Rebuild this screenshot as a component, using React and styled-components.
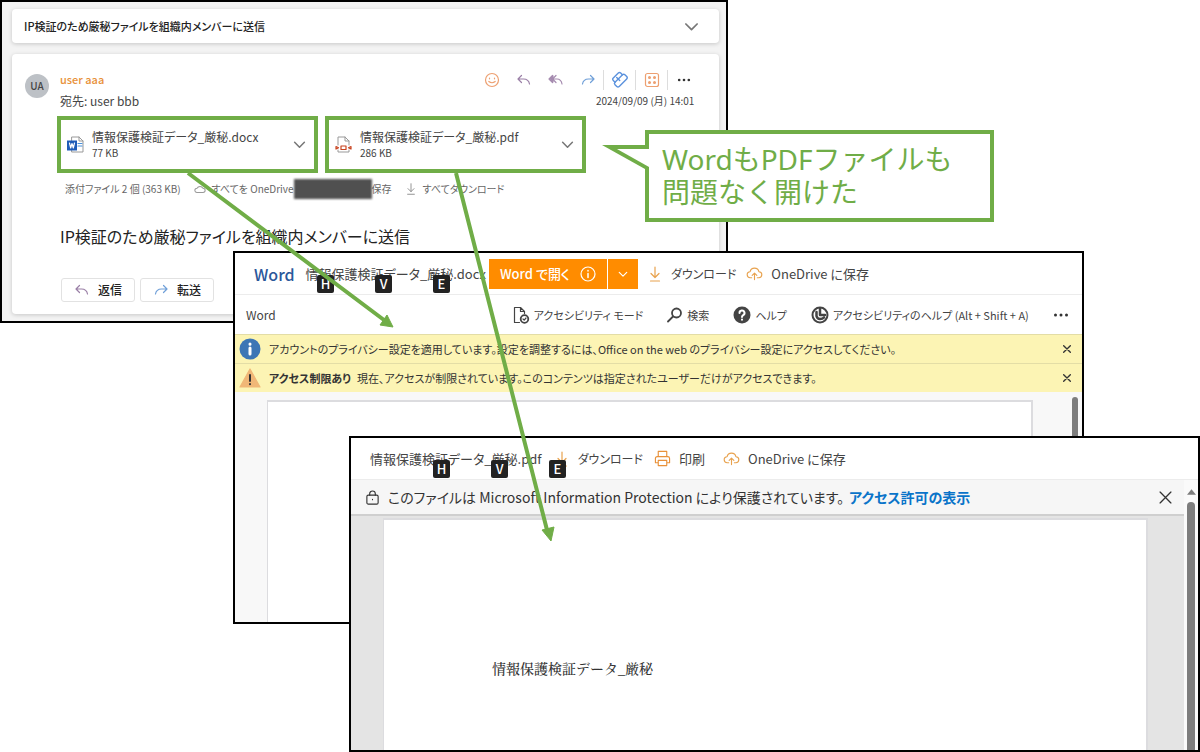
import React from "react";
import styled, { createGlobalStyle } from "styled-components";

const GREEN = "#70ad47";

const GlobalStyle = createGlobalStyle`
  * {
    box-sizing: border-box;
  }
  body {
    margin: 0;
    background: #fff;
    color: #444;
    font-family: "Noto Sans CJK JP", sans-serif;
    font-feature-settings: "palt";
    font-size: 12px;
    line-height: 16px;
  }
  button {
    font: inherit;
    font-feature-settings: inherit;
    color: inherit;
    background: none;
    border: none;
    padding: 0;
    display: inline-flex;
    align-items: center;
    white-space: nowrap;
    cursor: pointer;
  }
  h1, h2, p {
    margin: 0;
    font-weight: 400;
  }
`;

//the three windows are stacked freely on this canvas
const Stage = styled.main`
  position: relative;
  min-height: 752px;
  overflow: hidden;
`;
const Window = styled.section`
  position: absolute;
  left: ${(props) => props.$left}px;
  top: ${(props) => props.$top}px;
  width: ${(props) => props.$width};
  min-height: ${(props) => props.$height}px;
  display: flex;
  flex-direction: column;
  border: 2px solid #000;
  background: ${(props) => props.$bg || "#fff"};
  overflow: hidden;
  white-space: nowrap;
`;
const Svg = styled.svg`
  flex: none;
  width: ${(props) => props.$w || 16}px;
  height: ${(props) => props.$h || props.$w || 16}px;
  color: ${(props) => props.$color || "inherit"};
  fill: none;
  stroke: currentColor;
  stroke-width: ${(props) => props.$stroke || 1.2};
  stroke-linecap: round;
  stroke-linejoin: round;
`;

//mail
const MailBody = styled.div`
  flex: 1;
  display: flex;
  flex-direction: column;
  gap: 11px;
  padding: 7px 7px 7px 10px;
`;
const Card = styled.div`
  background: #fff;
  border-radius: 4px;
  box-shadow: 0 1px 4px rgba(0, 0, 0, 0.18);
`;
const ThreadTitle = styled(Card)`
  height: 34px;
  display: flex;
  align-items: center;
  justify-content: space-between;
  padding: 0 20px 0 12px;
  h1 {
    font-size: 11px;
    font-weight: 500;
    color: #222;
  }
`;
const Message = styled(Card)`
  flex: 1;
  padding: 14px 20px 12px 13px;
`;
const MessageHead = styled.header`
  display: grid;
  grid-template-columns: 24px 1fr auto;
  column-gap: 11px;
`;
const Avatar = styled.div`
  width: 24px;
  height: 24px;
  margin-top: 6px;
  border-radius: 50%;
  background: #bdc1c6;
  color: #444;
  font-size: 10px;
  font-weight: 500;
  display: flex;
  align-items: center;
  justify-content: center;
`;
const People = styled.div`
  display: grid;
  grid-template-rows: 21px 24px;
  align-items: center;
  strong {
    color: #e8913a;
    font-size: 11px;
    font-weight: 500;
  }
`;
const HeadRight = styled.div`
  display: grid;
  grid-template-rows: 24px 18px;
  align-items: center;
  justify-items: end;
  time {
    margin-right: 5px;
    font-size: 10px;
  }
`;
const Actions = styled.div`
  display: flex;
  align-items: center;
  button {
    justify-content: center;
    width: 32px;
    height: 20px;
    border-left: 1px solid transparent;
  }
  button.divided {
    border-left-color: #ddd;
  }
`;
const Attachments = styled.div`
  display: flex;
  gap: 7px;
  margin: 3px 0 0 32px;
`;
const Attachment = styled.button`
  && {
    width: 261px;
    height: 57px;
    border: 4px solid ${GREEN};
    background: #fff;
    padding: 4px 8px 4px 6px;
    gap: 8px;
    text-align: left;
  }
  div {
    flex: 1;
    display: grid;
  }
  small {
    font-size: 10px;
  }
`;
const SaveRow = styled.div`
  display: flex;
  align-items: center;
  margin: 6px 0 0 40px;
  height: 20px;
  font-size: 10px;
  color: #666;
  button {
    gap: 6px;
    margin-left: 13px;
  }
`;
const Redacted = styled.span`
  width: 78px;
  height: 20px;
  background: #505050;
  filter: blur(1px);
`;
const Subject = styled.h2`
  margin: 23px 0 0 35px;
  font-size: 16px;
  line-height: 28px;
  color: #222;
`;
const Replies = styled.div`
  display: flex;
  gap: 5px;
  margin: 28px 0 0 36px;
  button {
    width: 74px;
    height: 24px;
    justify-content: center;
    gap: 8px;
    border: 1px solid #e2e2e2;
    border-radius: 3px;
    font-weight: 500;
    color: #222;
  }
`;

//viewers
const ViewerHead = styled.header`
  position: relative;
  display: flex;
  align-items: center;
  height: 42px;
  padding-left: 19px;
  border-bottom: 1px solid #ececec;
  font-size: 13px;
`;
const Tool = styled.button`
  && {
    gap: 8px;
    margin-left: ${(props) => props.$gap}px;
    font-size: ${(props) => props.$size || 13}px;
  }
`;
const Brand = styled.strong`
  margin-right: 11px;
  font-size: 16px;
  font-weight: 500;
  color: #2b579a;
`;
const KeyTips = styled.div`
  position: absolute;
  left: 82px;
  bottom: 1px;
  display: flex;
  gap: 41px;
`;
const Key = styled.kbd`
  width: 17px;
  height: 18px;
  border-radius: 2px;
  background: #222;
  color: #fff;
  font-family: inherit;
  font-size: 13px;
  font-weight: 500;
  line-height: 18px;
  text-align: center;
`;
const OpenInWord = styled.div`
  display: flex;
  gap: 1px;
  height: 30px;
  margin-left: 3px;
  button {
    justify-content: center;
    gap: 10px;
    padding: 0 11px;
    background: #ff8c00;
    color: #fff;
    font-weight: 500;
  }
  button:last-child {
    width: 30px;
    padding: 0;
  }
`;
const WordTools = styled.nav`
  display: flex;
  align-items: center;
  justify-content: flex-end;
  gap: 24px;
  height: 39px;
  padding: 0 13px 0 11px;
  font-size: 11px;
  span {
    margin-right: auto;
    font-size: 12px;
  }
  button {
    gap: 4px;
  }
`;
const Notice = styled.div`
  display: flex;
  align-items: center;
  gap: 8px;
  height: 29px;
  padding: 0 11px 0 4px;
  background: #fcf4b4;
  border-top: 1px solid #e3dda6;
  color: #333;
  font-size: 11px;
  p {
    flex: 1;
  }
  b {
    font-weight: 700;
    margin-right: 6px;
  }
`;
const WordCanvas = styled.div`
  flex: 1;
  display: flex;
  background: #f8f8f8;
  padding: 0 4px 0 32px;
`;
const Sheet = styled.article`
  flex: 1;
  background: #fff;
  border: solid #dcdcdf;
  border-width: 2px 2px 0 1px;
  margin: ${(props) => props.$margin};
`;
const ScrollColumn = styled.div`
  display: flex;
  flex-direction: column;
`;
const Thumb = styled.div`
  flex: 1;
  width: ${(props) => props.$width}px;
  margin-top: ${(props) => props.$top}px;
  border-radius: 4px 4px 0 0;
  background: #7d7d7d;
`;
const PdfMain = styled.div`
  flex: 1;
  display: flex;
`;
const PdfPane = styled.div`
  flex: 1;
  display: flex;
  flex-direction: column;
  background: #e4e4e4;
`;
const ProtectBar = styled.div`
  display: flex;
  align-items: center;
  height: 36px;
  padding: 0 12px 0 14px;
  background: #f6f6f6;
  border-bottom: 2px solid #cfcfcf;
  font-size: 14px;
  color: #333;
  p {
    margin: 0 5px 0 8px;
  }
  a {
    margin-right: auto;
    color: #0a74c9;
    font-weight: 700;
    text-decoration: none;
  }
`;
const DocText = styled.p`
  padding: 138px 0 0 108px;
  font-family: "Liberation Serif", "Noto Serif CJK JP", "Noto Sans CJK JP", serif;
  font-feature-settings: normal;
  font-size: 14px;
  font-weight: 500;
  line-height: 24px;
  color: #333;
`;
const PdfScroll = styled.div`
  display: flex;
  flex-direction: column;
  align-items: center;
  width: 14px;
  padding-top: 9px;
  background: #fafafa;
`;

//annotations drawn above the windows
const Callout = styled.aside`
  position: absolute;
  left: 645px;
  top: 130px;
  width: 349px;
  padding: 9px 13px;
  border: 4px solid ${GREEN};
  background: #fff;
  color: ${GREEN};
  font-family: "Noto Sans", "Noto Sans CJK JP", sans-serif;
  font-feature-settings: normal;
  font-size: 28px;
  font-weight: 400;
  line-height: 33px;
`;
const Tail = styled.svg`
  position: absolute;
  left: -50px;
  top: 9px;
`;
const Arrows = styled.svg`
  position: absolute;
  left: 0;
  top: 0;
  pointer-events: none;
`;

const Chevron = (props) => (
  <Svg viewBox="0 0 12 12" $w={13} $color="#777" $stroke={1.4} {...props}>
    <path d="M1.5 4 6 8.5 10.5 4" />
  </Svg>
);
const Reply = (props) => (
  <Svg viewBox="0 0 16 16" $color="#9a7fa6" {...props}>
    <path d="M5.500 3.500 2 7l3.500 3.500M2 7h5.500c3.500 0 5.500 2 6 5" />
  </Svg>
);
const Forward = (props) => (
  <Svg viewBox="0 0 16 16" $color="#6f9fd8" {...props}>
    <path d="m10.500 3.500 3.500 3.500-3.500 3.500M14 7H8.500c-3.500 0-5.500 2-6 5" />
  </Svg>
);
const Dots = (props) => (
  <Svg viewBox="0 0 16 16" $color="#333" {...props}>
    <g fill="currentColor" stroke="none">
      <circle cx="2.500" cy="8" r="1.500" />
      <circle cx="8" cy="8" r="1.500" />
      <circle cx="13.500" cy="8" r="1.500" />
    </g>
  </Svg>
);
const Download = (props) => (
  <Svg viewBox="0 0 16 16" $color="#e8a24e" {...props}>
    <path d="M8 1v10.500M4 7.500l4 4 4-4M3.500 15h9" />
  </Svg>
);
const CloudUp = () => (
  <Svg viewBox="0 0 18 16" $w={17} $h={15} $color="#e8a24e">
    <path d="M6 12.500H4.500a3.200 3.200 0 0 1-.2-6.400 4.800 4.800 0 0 1 9.400 0 3.200 3.200 0 0 1-.2 6.400H12M9 14.500V7.500M6.500 10 9 7.500l2.500 2.500" />
  </Svg>
);
const Close = (props) => (
  <Svg viewBox="0 0 12 12" $w={12} {...props}>
    <path d="m1 1 10 10M11 1 1 11" />
  </Svg>
);

function Keys() {
  return (
    <KeyTips>
      {["H", "V", "E"].map((key) => (
        <Key key={key}>{key}</Key>
      ))}
    </KeyTips>
  );
}

function MailWindow() {
  return (
    <Window $left={0} $top={0} $width="60.7%" $height={323} $bg="#f3f3f3">
      <MailBody>
        <ThreadTitle>
          <h1>IP検証のため厳秘ファイルを組織内メンバーに送信</h1>
          <button aria-label="展開">
            <Chevron $w={15} />
          </button>
        </ThreadTitle>
        <Message>
          <MessageHead>
            <Avatar>UA</Avatar>
            <People>
              <strong>user aaa</strong>
              <span>宛先: user bbb</span>
            </People>
            <HeadRight>
              <Actions>
                <button aria-label="リアクション">
                  <Svg viewBox="0 0 16 16" $color="#eda071">
                    <circle cx="8" cy="8" r="6.500" />
                    <path d="M5.500 6v.8M10.500 6v.8M4.800 9.500q3.200 2.500 6.400 0" />
                  </Svg>
                </button>
                <button aria-label="返信">
                  <Reply />
                </button>
                <button aria-label="全員に返信">
                  <Svg viewBox="0 0 16 16" $color="#a68cb0">
                    <path
                      d="M4.500 3.500 1 7l3.500 3.500M8 3.500 4.500 7 8 10.500M4.500 7H9c3 0 4.500 2 5 5"
                    />
                    <path d="M5 4v6L2 7z" fill="currentColor" />
                  </Svg>
                </button>
                <button aria-label="転送">
                  <Forward />
                </button>
                <button className="divided" aria-label="Viva">
                  <Svg viewBox="0 0 18 18" $w={18} $color="#5b92dd" $stroke={1.4}>
                    <path d="m5.500 9.800 6-6q1.200-1.200 2.400 0l1.800 1.800q1.200 1.200 0 2.400l-7.500 7.500q-1.200 1.200-2.400 0L4 13.700q-1.200-1.200 0-2.400z" />
                    <path d="M4 11.300 2.300 9.500q-1.200-1.200 0-2.400l5-5q1.200-1.200 2.400 0l1.700 1.700M5.700 6.500l3 3" />
                  </Svg>
                </button>
                <button className="divided" aria-label="アプリ">
                  <Svg viewBox="0 0 16 16" $color="#eda071">
                    <rect x="1.500" y="1.500" width="13" height="13" rx="2" />
                    <path
                      d="M5.500 5.500h.01M10.500 5.500h.01M5.500 10.500h.01M10.500 10.500h.01"
                      strokeWidth="3"
                    />
                  </Svg>
                </button>
                <button className="divided" aria-label="その他">
                  <Dots $w={14} />
                </button>
              </Actions>
              <time dateTime="2024-09-09T14:01">2024/09/09 (月) 14:01</time>
            </HeadRight>
          </MessageHead>

          <Attachments>
            <Attachment>
              <Svg viewBox="0 0 17 17" $w={17} $color="#999">
                <path d="M5 1h7l4 4v11H5zM12 1v4h4" fill="#fff" strokeWidth="1" />
                <path d="M11 7.500h4M11 10h4" stroke="#4a90d9" />
                <path d="M0 4.500h10v10H0z" fill="#1e5cb8" stroke="none" />
                <path d="m2.500 7 1.200 5L5 7.500 6.300 12l1.200-5" stroke="#fff" />
              </Svg>
              <div>
                <span>情報保護検証データ_厳秘.docx</span>
                <small>77 KB</small>
              </div>
              <Chevron />
            </Attachment>
            <Attachment>
              <Svg viewBox="0 0 17 17" $w={17} $color="#999">
                <path d="M3 9V1h7l4 4v4M10 1v4h4M3 14v2h11v-2" strokeWidth="1" />
                <path
                  d="M6 10h5v3.500H6zM1 10.500l2.500 1.300L1 13zM16 10.500l-2.500 1.300L16 13z"
                  stroke="#c8431f"
                />
              </Svg>
              <div>
                <span>情報保護検証データ_厳秘.pdf</span>
                <small>286 KB</small>
              </div>
              <Chevron />
            </Attachment>
          </Attachments>

          <SaveRow>
            <span>添付ファイル 2 個 (363 KB)</span>
            <button>
              <Svg viewBox="0 0 14 10" $w={12} $h={9} $color="#999">
                <path d="M3.500 8.500a2.500 2.500 0 0 1 0-5 4 4 0 0 1 7 0 2.500 2.500 0 0 1 0 5z" />
              </Svg>
              すべてを OneDrive
            </button>
            <Redacted />
            <span>保存</span>
            <button>
              <Download $w={12} $color="#888" />
              すべてダウンロード
            </button>
          </SaveRow>

          <Subject>IP検証のため厳秘ファイルを組織内メンバーに送信</Subject>
          <Replies>
            <button>
              <Reply />
              返信
            </button>
            <button>
              <Forward />
              転送
            </button>
          </Replies>
        </Message>
      </MailBody>
    </Window>
  );
}

function WordWindow() {
  return (
    <Window $left={233} $top={251} $width="70.9%" $height={373}>
      <ViewerHead>
        <Brand>Word</Brand>
        <span>情報保護検証データ_厳秘.docx</span>
        <OpenInWord>
          <button>
            Word で開く
            <Svg viewBox="0 0 16 16">
              <circle cx="8" cy="8" r="7" />
              <path d="M8 7.500v4M8 4.500v.5" strokeWidth="1.500" />
            </Svg>
          </button>
          <button aria-label="開き方">
            <Chevron $w={10} $color="#fff" />
          </button>
        </OpenInWord>
        <Tool $gap={9} $size={12}>
          <Download />
          ダウンロード
        </Tool>
        <Tool $gap={10}>
          <CloudUp />
          OneDrive に保存
        </Tool>
        <Keys />
      </ViewerHead>
      <WordTools>
        <span>Word</span>
        <button>
          <Svg viewBox="0 0 18 18" $w={18}>
            <path d="M7.500 16.500h-5v-15h6l4 4v2M8.500 1.500v4h4" />
            <circle cx="12.500" cy="13" r="3.800" strokeWidth="1.800" />
            <path d="m11 13 1.200 1.200L14 12" />
          </Svg>
          アクセシビリティ モード
        </button>
        <button>
          <Svg viewBox="0 0 16 16" $stroke={1.8}>
            <circle cx="9.500" cy="6" r="4.500" />
            <path d="m6 9.500-5 5" />
          </Svg>
          検索
        </button>
        <button>
          <Svg viewBox="0 0 18 18" $w={18}>
            <circle cx="9" cy="9" r="8.500" fill="currentColor" stroke="none" />
            <path d="M6.500 7a2.500 2.500 0 1 1 3.700 2.200Q9 10 9 11M9 13.500v.2" stroke="#fff" strokeWidth="2" />
          </Svg>
          ヘルプ
        </button>
        <button>
          <Svg viewBox="0 0 18 18" $w={18}>
            <circle cx="9" cy="9" r="7.500" strokeWidth="2" />
            <path d="M9 3v6h5M5.500 6v4q.8 3 3.500 3t4-1.500" strokeWidth="2.500" />
          </Svg>
          アクセシビリティのヘルプ (Alt + Shift + A)
        </button>
        <button aria-label="その他">
          <Dots />
        </button>
      </WordTools>
      <Notice>
        <Svg viewBox="0 0 22 22" $w={22}>
          <circle cx="11" cy="11" r="10.500" fill="#3d76b5" stroke="none" />
          <path d="M11 10v6M11 6v.2" stroke="#fff" strokeWidth="3" />
        </Svg>
        <p>
          アカウントのプライバシー設定を適用しています。設定を調整するには、Office
          on the web のプライバシー設定にアクセスしてください。
        </p>
        <button aria-label="閉じる">
          <Close $w={8} $stroke={2} />
        </button>
      </Notice>
      <Notice>
        <Svg viewBox="0 0 22 22" $w={22}>
          <path d="M11 2 21 20H1z" fill="#f0b777" stroke="#f0b777" />
          <path d="M11 8v6M11 17v.2" stroke="#333" strokeWidth="2" />
        </Svg>
        <p>
          <b>アクセス制限あり</b>
          現在、アクセスが制限されています。このコンテンツは指定されたユーザーだけがアクセスできます。
        </p>
        <button aria-label="閉じる">
          <Close $w={8} $stroke={2} />
        </button>
      </Notice>
      <WordCanvas>
        <Sheet $margin="8px 39px 0 0" />
        <ScrollColumn>
          <Thumb $width={6} $top={5} />
        </ScrollColumn>
      </WordCanvas>
    </Window>
  );
}

function PdfWindow() {
  return (
    <Window $left={349} $top={436} $width="calc(100% - 349px)" $height={316}>
      <ViewerHead>
        <span>情報保護検証データ_厳秘.pdf</span>
        <Tool $gap={12} $size={12}>
          <Download />
          ダウンロード
        </Tool>
        <Tool $gap={11}>
          <Svg viewBox="0 0 18 18" $w={17} $color="#e8913a">
            <path d="M4.500 7V1.500h9V7M4.500 13.500h-3V9q0-2 2-2h11q2 0 2 2v4.500h-3M4.500 11h9v5.500h-9z" />
          </Svg>
          印刷
        </Tool>
        <Tool $gap={18}>
          <CloudUp />
          OneDrive に保存
        </Tool>
        <Keys />
      </ViewerHead>
      <PdfMain>
        <PdfPane>
          <ProtectBar>
            <Svg viewBox="0 0 16 16" $w={15}>
              <rect x="2" y="5.500" width="12" height="9.500" rx="1.500" />
              <path d="M5 5.500V4a3 3 0 0 1 6 0v1.500M8 10v.3" />
            </Svg>
            <p>
              このファイルは Microsoft Information Protection
              により保護されています。
            </p>
            <a href="#permissions">アクセス許可の表示</a>
            <button aria-label="閉じる">
              <Close $w={13} />
            </button>
          </ProtectBar>
          <Sheet $margin="2px 36px 0 32px">
            <DocText>情報保護検証データ_厳秘</DocText>
          </Sheet>
        </PdfPane>
        <PdfScroll>
          <Svg viewBox="0 0 10 6" $w={9} $h={6}>
            <path d="M5 0 10 6H0z" fill="#7d7d7d" stroke="none" />
          </Svg>
          <Thumb $width={8} $top={7} />
        </PdfScroll>
      </PdfMain>
    </Window>
  );
}

export default function App() {
  return (
    <Stage>
      <GlobalStyle />
      <MailWindow />
      <WordWindow />
      <PdfWindow />
      <Callout>
        <Tail width="50" height="30" viewBox="0 0 50 30">
          <path d="M3 2h43v24z" fill={GREEN} />
          <path d="M18 6h32v18z" fill="#fff" />
        </Tail>
        WordもPDFファイルも
        <br />
        問題なく開けた
      </Callout>
      <Arrows width="600" height="560" fill={GREEN} stroke={GREEN}>
        <path d="M188 173 384 320M456 173l91 357" strokeWidth="4" />
        <path d="m393 327-13-2 7-10zM551 541l-9-11 12-3z" strokeWidth="1" />
      </Arrows>
    </Stage>
  );
}
